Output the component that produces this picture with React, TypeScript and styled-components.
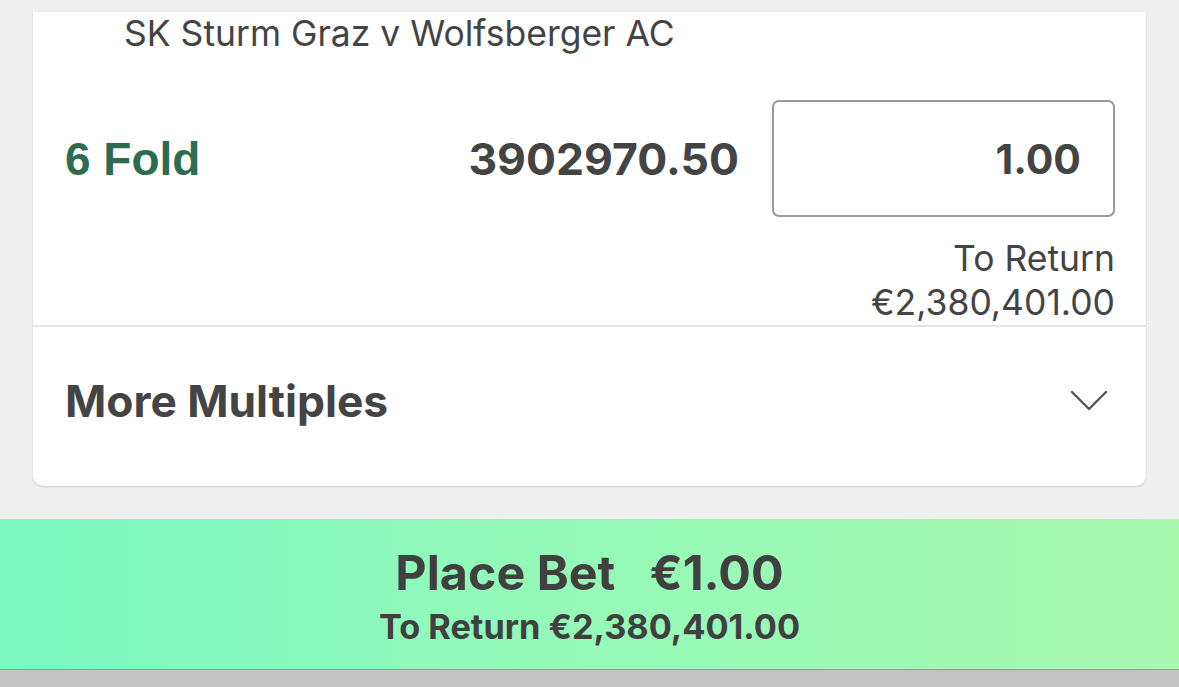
import React from "react";
import styled, { createGlobalStyle } from "styled-components";

const Global = createGlobalStyle`
  html, body { margin: 0; padding: 0; background: #efefef; }
  body { font-family: Inter, "Noto Sans", sans-serif; color: #444; }
`;

const Page = styled.div`
  width: 1179px;
  height: 687px;
  display: flex;
  flex-direction: column;
  background: #efefef;
  overflow: hidden;
`;

const Card = styled.section`
  margin: 12px 33px 0 33px;
  background: #fff;
  border-radius: 0 0 10px 10px;
  box-shadow: 0 1px 2px rgba(0, 0, 0, 0.14), 0 0 1px rgba(0, 0, 0, 0.12);
  display: flex;
  flex-direction: column;
`;

const MatchLine = styled.div`
  padding-left: 91px;
  font-size: 35.5px;
  line-height: 44px;
  height: 44px;
  color: #444;
  white-space: nowrap;
`;

const FoldRow = styled.div`
  display: flex;
  align-items: center;
  padding: 44px 31px 0 32px;
`;

const FoldLabel = styled.div`
  flex: 1;
  font-family: "Liberation Sans", Arial, sans-serif;
  font-weight: 700;
  font-size: 46px;
  color: #2d6c51;
`;

const Odds = styled.div`
  font-weight: 700;
  font-size: 44.5px;
  color: #444;
  margin-right: 33px;
`;

const StakeBox = styled.div`
  box-sizing: border-box;
  width: 343px;
  height: 117px;
  border: 2px solid #9a9a9a;
  border-radius: 7px;
  display: flex;
  align-items: center;
  justify-content: flex-end;
  padding-right: 32px;
  font-weight: 700;
  font-size: 41px;
  color: #444;
`;

const ReturnBlock = styled.div`
  padding: 20px 31px 0 0;
  text-align: right;
  font-size: 35.5px;
  line-height: 44px;
  color: #444;
  white-space: nowrap;
`;

const Divider = styled.div`
  height: 2px;
  background: #e5e5e5;
`;

const MoreRow = styled.div`
  height: 159px;
  box-sizing: border-box;
  display: flex;
  align-items: center;
  justify-content: space-between;
  padding: 0 38px 12px 32px;
`;

const MoreLabel = styled.div`
  font-weight: 700;
  font-size: 44.3px;
  color: #444;
`;

const Chevron = styled.svg`
  width: 38px;
  height: 22px;
  display: block;
`;

const PlaceBar = styled.button`
  margin-top: 33px;
  height: 150px;
  box-sizing: border-box;
  border: none;
  background: linear-gradient(90deg, #7af7c2 0%, #93f9b8 45%, #a9f9b1 100%);
  display: flex;
  flex-direction: column;
  align-items: center;
  justify-content: flex-start;
  padding: 28px 0 0 0;
  font-family: Inter, "Noto Sans", sans-serif;
  color: #404040;
`;

const PlaceMain = styled.div`
  font-weight: 700;
  font-size: 48.4px;
  line-height: 52px;
  white-space: pre;
`;

const PlaceSub = styled.div`
  margin-top: 8px;
  font-weight: 700;
  font-size: 34.3px;
  line-height: 40px;
  white-space: nowrap;
`;

const BottomBar = styled.div`
  flex: 1;
  background: #c3c3c3;
  border-top: 1px solid #8fa092;
`;

export default function App() {
  return (
    <Page>
      <Global />
      <Card>
        <MatchLine>SK Sturm Graz v Wolfsberger AC</MatchLine>
        <FoldRow>
          <FoldLabel>6 Fold</FoldLabel>
          <Odds>3902970.50</Odds>
          <StakeBox>1.00</StakeBox>
        </FoldRow>
        <ReturnBlock>
          <div>To Return</div>
          <div>€2,380,401.00</div>
        </ReturnBlock>
        <Divider />
        <MoreRow>
          <MoreLabel>More Multiples</MoreLabel>
          <Chevron viewBox="0 0 38 22">
            <path d="M2 2 L19 19 L36 2" fill="none" stroke="#555" strokeWidth="2.4" strokeLinecap="round" strokeLinejoin="round" />
          </Chevron>
        </MoreRow>
      </Card>
      <PlaceBar>
        <PlaceMain>{"Place Bet   €1.00"}</PlaceMain>
        <PlaceSub>To Return €2,380,401.00</PlaceSub>
      </PlaceBar>
      <BottomBar />
    </Page>
  );
}
